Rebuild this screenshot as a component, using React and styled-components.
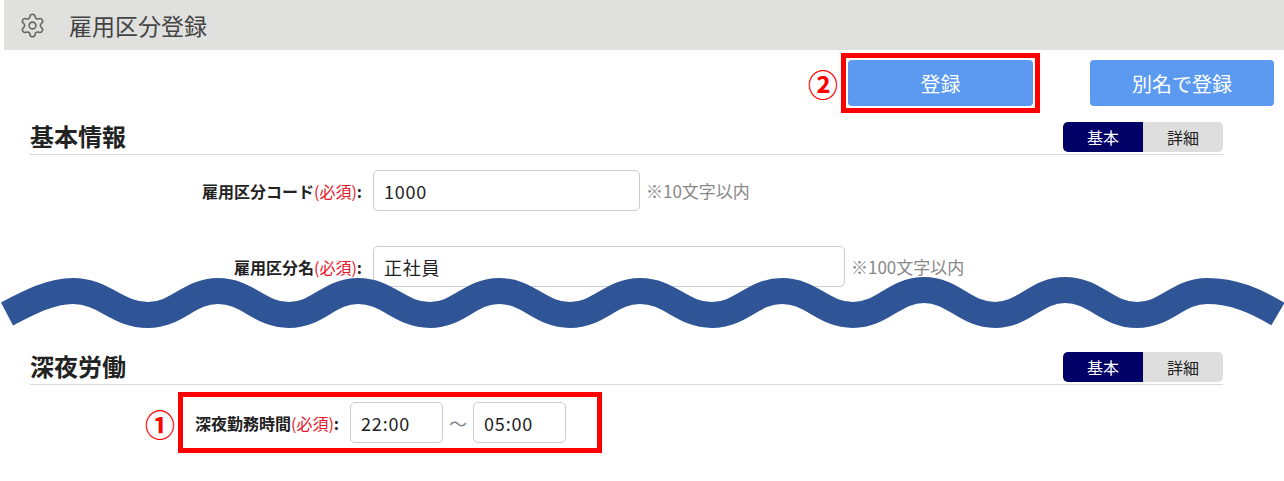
import React from "react";
import styled, { createGlobalStyle } from "styled-components";
import { Settings } from "lucide-react";

const GlobalStyle = createGlobalStyle`
  html, body {
    margin: 0;
    padding: 0;
    background: #fff;
  }
  body {
    font-family: "Noto Sans CJK JP", "Noto Sans", sans-serif;
    color: #222;
  }
`;

const Page = styled.div`
  position: relative;
  width: 1284px;
  height: 481px;
  overflow: hidden;
`;

const TitleBar = styled.header`
  height: 50px;
  margin-left: 4px;
  padding-left: 15px;
  display: flex;
  align-items: center;
  gap: 23px;
  background: #e0e0de;
  color: #444;
  font-size: 23px;
  line-height: 1;
  svg {
    color: #666;
    flex: none;
  }
`;

const Actions = styled.div`
  height: 60px;
  margin-top: 3px;
  padding-right: 10px;
  display: flex;
  justify-content: flex-end;
  align-items: center;
`;

const Marker = styled.span`
  flex: none;
  width: 30px;
  color: #f00;
  font-size: 30px;
  font-weight: 700;
  line-height: 1;
  text-align: center;
`;

const SaveMarker = styled(Marker)`
  margin-right: 3px;
`;

const HighlightButton = styled.div`
  box-sizing: border-box;
  width: 199px;
  height: 60px;
  margin-right: 50px;
  padding: 2px;
  border: 5px solid #f00;
  display: flex;
`;

const Button = styled.button`
  box-sizing: border-box;
  width: ${(p) => p.$width || "100%"};
  height: 46px;
  padding: 0;
  border: none;
  border-radius: 4px;
  background: #5b9af0;
  color: #fff;
  font-family: inherit;
  font-size: 20px;
`;

const Section = styled.section`
  width: 1193px;
  margin-left: 30px;
  margin-top: ${(p) => p.$top}px;
`;

const SectionHead = styled.div`
  display: flex;
  justify-content: space-between;
  align-items: flex-end;
  height: 32px;
  border-bottom: 1px solid #d9d9d9;
`;

const SectionTitle = styled.h2`
  margin: 0 0 2px;
  font-size: 24px;
  font-weight: 700;
  line-height: 32px;
  color: #222;
`;

const Toggle = styled.div`
  display: flex;
  align-self: flex-start;
  width: 160px;
  height: 30px;
  border-radius: 5px;
  overflow: hidden;
`;

const ToggleItem = styled.span`
  flex: 1;
  display: flex;
  align-items: center;
  justify-content: center;
  font-size: 16px;
  background: ${(p) => (p.$active ? "#000066" : "#dedede")};
  color: ${(p) => (p.$active ? "#fff" : "#222")};
`;

const Row = styled.div`
  display: flex;
  align-items: center;
  height: 41px;
  margin-top: ${(p) => p.$top}px;
`;

const Label = styled.label`
  flex: none;
  width: 332px;
  margin-right: 11px;
  text-align: right;
  font-size: 16px;
  font-weight: 700;
  color: #222;
  white-space: nowrap;
`;

const Required = styled.span`
  color: #e8192c;
  font-weight: 400;
`;

const Input = styled.input`
  box-sizing: border-box;
  flex: none;
  width: ${(p) => p.$width}px;
  height: 41px;
  padding: 0 10px;
  border: 1px solid #ccc;
  border-radius: 5px;
  background: #fff;
  color: #222;
  font-family: inherit;
  font-size: 18px;
  letter-spacing: 0.8px;
  outline: none;
`;

const Note = styled.span`
  margin-left: 6px;
  color: #888;
  font-size: 17px;
`;

const TimeRow = styled.div`
  display: flex;
  align-items: center;
  margin-top: 7px;
  margin-left: 115px;
  gap: 3px;
`;

const HighlightRow = styled.div`
  box-sizing: border-box;
  width: 424px;
  height: 61px;
  padding-left: 12px;
  border: 5px solid #f00;
  display: flex;
  align-items: center;
`;

const TimeLabel = styled(Label)`
  width: auto;
  margin-right: 11px;
`;

const Tilde = styled.span`
  width: 30px;
  text-align: center;
  color: #888;
  font-size: 18px;
`;

const WaveSvg = styled.svg`
  position: absolute;
  left: 0;
  top: 0;
  pointer-events: none;
`;

// peaks and troughs of the wave, left to right
const wavePoints = [
  [73, 291], [148, 315], [218, 291], [289, 315], [358, 291], [430, 315],
  [499, 291], [570, 315], [640, 291], [712, 315], [782, 291], [853, 315],
  [924, 290], [995, 315], [1065, 290], [1137, 315], [1207, 291],
];

function wavePath() {
  let d = `M7 314 C28 303 50 ${wavePoints[0][1]} ${wavePoints[0][0]} ${wavePoints[0][1]}`;
  for (let i = 1; i < wavePoints.length; i++) {
    const [x0, y0] = wavePoints[i - 1];
    const [x1, y1] = wavePoints[i];
    const c = (x1 - x0) * 0.42;
    d += ` C${x0 + c} ${y0} ${x1 - c} ${y1} ${x1} ${y1}`;
  }
  return d + " C1234 291 1256 301 1278 314";
}

export default function App() {
  return (
    <Page>
      <GlobalStyle />
      <TitleBar>
        <Settings size={27} strokeWidth={1.4} />
        <span>雇用区分登録</span>
      </TitleBar>
      <Actions>
        <SaveMarker>②</SaveMarker>
        <HighlightButton>
          <Button>登録</Button>
        </HighlightButton>
        <Button $width="184px">別名で登録</Button>
      </Actions>
      <Section $top={9}>
        <SectionHead>
          <SectionTitle>基本情報</SectionTitle>
          <Toggle>
            <ToggleItem $active>基本</ToggleItem>
            <ToggleItem>詳細</ToggleItem>
          </Toggle>
        </SectionHead>
        <Row $top={15}>
          <Label>
            雇用区分コード<Required>(必須)</Required>:
          </Label>
          <Input $width={267} value="1000" readOnly />
          <Note>※10文字以内</Note>
        </Row>
        <Row $top={35}>
          <Label>
            雇用区分名<Required>(必須)</Required>:
          </Label>
          <Input $width={472} value="正社員" readOnly />
          <Note>※100文字以内</Note>
        </Row>
      </Section>
      <Section $top={65}>
        <SectionHead>
          <SectionTitle>深夜労働</SectionTitle>
          <Toggle>
            <ToggleItem $active>基本</ToggleItem>
            <ToggleItem>詳細</ToggleItem>
          </Toggle>
        </SectionHead>
        <TimeRow>
          <Marker>①</Marker>
          <HighlightRow>
            <TimeLabel>
              深夜勤務時間<Required>(必須)</Required>:
            </TimeLabel>
            <Input $width={93} value="22:00" readOnly />
            <Tilde>～</Tilde>
            <Input $width={93} value="05:00" readOnly />
          </HighlightRow>
        </TimeRow>
      </Section>
      <WaveSvg width="1284" height="481" viewBox="0 0 1284 481">
        <path d={wavePath()} fill="none" stroke="#2f5597" strokeWidth="26" />
      </WaveSvg>
    </Page>
  );
}
